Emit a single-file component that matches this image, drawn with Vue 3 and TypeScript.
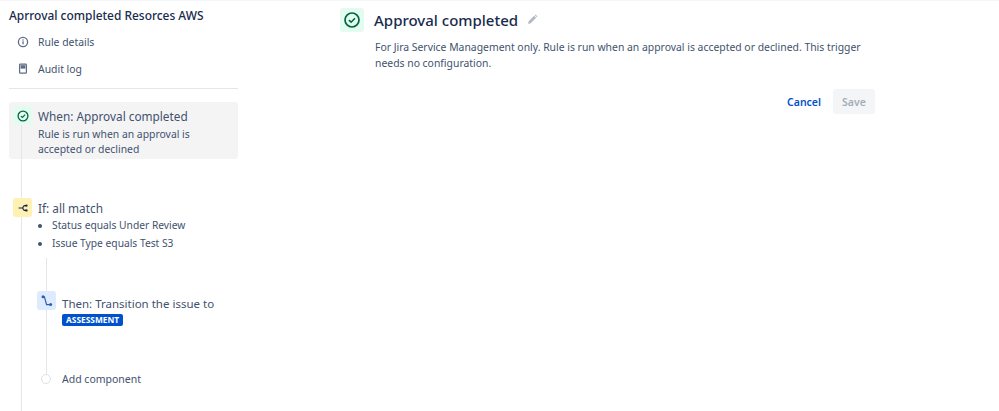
<script setup lang="ts">
const conditions = ['Status equals Under Review', 'Issue Type equals Test S3'];
</script>

<template>
  <div class="page">
    <aside class="side">
      <h2 class="rule-name">Aprroval completed Resorces AWS</h2>
      <nav class="side-nav">
        <div class="nav-row">
          <svg class="nav-icon" width="16" height="16" viewBox="0 0 16 16" fill="none">
            <circle cx="8" cy="8" r="4.6" stroke="#5e6c84" stroke-width="1.3" />
            <rect x="7.4" y="7.3" width="1.3" height="3" fill="#5e6c84" />
            <rect x="7.4" y="5.4" width="1.3" height="1.2" fill="#5e6c84" />
          </svg>
          <span>Rule details</span>
        </div>
        <div class="nav-row">
          <svg class="nav-icon" width="16" height="16" viewBox="0 0 16 16" fill="none">
            <rect x="4.6" y="3.2" width="6.8" height="9" rx="0.8" stroke="#5e6c84" stroke-width="1.2" />
            <rect x="5.6" y="4.2" width="4.8" height="3.4" fill="#5e6c84" />
          </svg>
          <span>Audit log</span>
        </div>
      </nav>
      <hr class="divider" />

      <div class="flow">
        <span class="trunk"></span>

        <section class="when">
          <div class="tile tile-green">
            <svg width="14" height="14" viewBox="0 0 14 14" fill="none">
              <circle cx="7" cy="7" r="4.9" stroke="#006644" stroke-width="1.3" />
              <path d="M4.9 7.1 6.4 8.5 9.1 5.7" stroke="#006644" stroke-width="1.2" />
            </svg>
          </div>
          <div>
            <div class="step-title">When: Approval completed</div>
            <div class="step-desc">Rule is run when an approval is<br />accepted or declined</div>
          </div>
        </section>

        <section class="cond">
          <div class="tile tile-yellow">
            <svg width="14" height="14" viewBox="0 0 14 14" fill="none">
              <path d="M2.5 7H6.5M10 4.6H8.2L6.5 7 8.2 9.4H10" stroke="#172b4d" stroke-width="1.2" />
              <circle cx="10.4" cy="4.6" r="1.2" fill="#172b4d" />
              <circle cx="10.4" cy="9.4" r="1.2" fill="#172b4d" />
            </svg>
          </div>
          <div>
            <div class="step-title">If: all match</div>
            <ul class="cond-list">
              <li v-for="c in conditions" :key="c">{{ c }}</li>
            </ul>
          </div>
        </section>

        <div class="branch">
          <span class="branch-line"></span>
          <section class="then">
            <div class="tile tile-blue">
              <svg width="14" height="14" viewBox="0 0 14 14" fill="none">
                <path d="M3 2.8H4.4L6.6 10.6H10.6" stroke="#2a5fb0" stroke-width="1.2" />
                <circle cx="3" cy="2.8" r="1.5" fill="#2a5fb0" />
                <circle cx="10.6" cy="10.6" r="1.5" fill="#2a5fb0" />
              </svg>
            </div>
            <div>
              <div class="step-title">Then: Transition the issue to</div>
              <span class="lozenge">ASSESSMENT</span>
            </div>
          </section>
          <div class="add">
            <span class="add-dot"></span>
            <span>Add component</span>
          </div>
        </div>
      </div>
    </aside>

    <main class="main">
      <header class="head">
        <div class="head-tile">
          <svg width="20" height="20" viewBox="0 0 20 20" fill="none">
            <circle cx="10" cy="10" r="7" stroke="#006644" stroke-width="1.7" />
            <path d="M6.9 10.2 9.1 12.2 13 8.2" stroke="#006644" stroke-width="1.6" />
          </svg>
        </div>
        <h1 class="head-title">Approval completed</h1>
        <svg class="pencil" width="11" height="11" viewBox="0 0 12 12">
          <path d="M1.2 10.8 1.8 8 7.8 2 10 4.2 4 10.2Z M8.5 1.3 9.4 0.6 11.4 2.6 10.7 3.5Z" fill="#b3b9c4" />
        </svg>
      </header>
      <p class="head-desc">
        For Jira Service Management only. Rule is run when an approval is accepted or declined. This trigger needs no configuration.
      </p>
      <div class="actions">
        <button class="btn-cancel">Cancel</button>
        <button class="btn-save" disabled>Save</button>
      </div>
    </main>
  </div>
</template>

<style>
html, body { margin: 0; background: #fff; }
</style>

<style scoped>
.page { display: flex; width: 999px; height: 411px; overflow: hidden; box-sizing: border-box; border-top: 1px solid #f4f5f7; font-family: "Noto Sans", "Open Sans", sans-serif; color: #42526e; }
.side { width: 229px; margin-left: 9px; flex: none; }
.rule-name { margin: 6px 0 0; font-size: 11.95px; line-height: 17px; font-weight: 500; color: #172b4d; white-space: nowrap; }
.side-nav { margin-top: 5px; }
.nav-row { display: flex; align-items: center; height: 26.5px; font-size: 10.4px; }
.nav-icon { margin: 0 7px 0 6px; flex: none; }
.divider { margin: 6px 0 13px; border: 0; border-top: 1px solid #e4e6ea; }
.flow { position: relative; }
.trunk { position: absolute; left: 12px; top: 20px; bottom: -100px; width: 1px; background: #e4e6ea; }
.when { display: flex; background: #f4f4f5; border-radius: 3px; height: 57px; padding: 4px 0 0 4px; box-sizing: border-box; }
.when .step-title { margin-top: 2px; }
.tile { position: relative; width: 19px; height: 19px; border-radius: 3px; display: flex; align-items: center; justify-content: center; flex: none; margin-right: 6px; }
.tile-green { background: #e3fcef; }
.tile-yellow { background: #fff0b3; }
.tile-blue { background: #deebff; }
.step-title { font-size: 11.8px; line-height: 17px; color: #42526e; white-space: nowrap; }
.step-desc { margin-top: 2px; font-size: 10.4px; line-height: 15px; color: #42526e; }
.cond { display: flex; margin-top: 39px; padding-left: 4px; }
.cond .step-title { margin-top: 2px; }
.cond-list { margin: -1px 0 0; padding: 0 0 0 14px; font-size: 10.25px; line-height: 18px; }
.branch { position: relative; margin: 6px 0 0 28px; padding-top: 33px; }
.branch-line { position: absolute; left: 9px; top: 0; height: 117px; width: 1px; background: #e4e6ea; }
.then { display: flex; }
.then .step-title { margin-top: 4px; font-size: 11.5px; }
.lozenge { display: block; width: fit-content; margin-top: 2px; padding: 0 4px; background: #0052cc; border-radius: 2px; color: #fff; font-size: 8.4px; line-height: 12px; font-weight: 700; }
.add { position: relative; display: flex; align-items: center; margin-top: 44px; height: 18px; font-size: 10.5px; }
.add-dot { width: 8px; height: 8px; margin: 0 11px 0 4px; border: 1px solid #dfe1e6; border-radius: 50%; background: #fff; flex: none; }
.main { margin-left: 102px; width: 535px; padding-top: 7px; }
.head { display: flex; align-items: center; }
.head-tile { width: 24px; height: 24px; background: #e3fcef; border-radius: 3px; display: flex; align-items: center; justify-content: center; margin-right: 10px; }
.head-title { margin: 0 9px 0 0; font-size: 15px; line-height: 24px; font-weight: 500; color: #172b4d; }
.pencil { margin-top: -1px; }
.head-desc { margin: 7px 0 0 35px; font-size: 10.4px; line-height: 16px; color: #42526e; }
.actions { display: flex; justify-content: flex-end; align-items: center; margin-top: 18px; }
.btn-cancel { border: 0; background: none; padding: 0; margin-right: 12px; font: inherit; font-size: 10.5px; font-weight: 600; color: #0052cc; }
.btn-save { width: 42px; height: 25px; border: 0; border-radius: 3px; background: #f4f5f7; padding: 0; font: inherit; font-size: 10.5px; font-weight: 600; color: #a5adba; }
</style>
